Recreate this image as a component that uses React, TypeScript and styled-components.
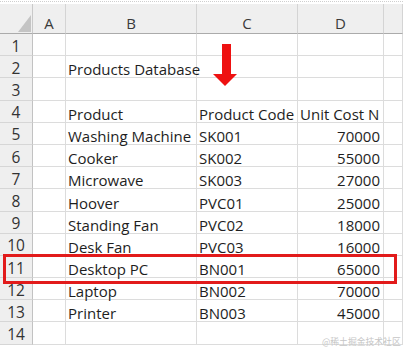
import React from 'react';
import styled, { createGlobalStyle } from 'styled-components';

type Align = 'left' | 'right';

type RowData = {
  product?: string;
  code?: string;
  cost?: string;
};

const rows: RowData[] = [
  {},
  { product: 'Products Database' },
  {},
  { product: 'Product', code: 'Product Code', cost: 'Unit Cost N' },
  { product: 'Washing Machine', code: 'SK001', cost: '70000' },
  { product: 'Cooker', code: 'SK002', cost: '55000' },
  { product: 'Microwave', code: 'SK003', cost: '27000' },
  { product: 'Hoover', code: 'PVC01', cost: '25000' },
  { product: 'Standing Fan', code: 'PVC02', cost: '18000' },
  { product: 'Desk Fan', code: 'PVC03', cost: '16000' },
  { product: 'Desktop PC', code: 'BN001', cost: '65000' },
  { product: 'Laptop', code: 'BN002', cost: '70000' },
  { product: 'Printer', code: 'BN003', cost: '45000' },
  {},
];

const GlobalStyle = createGlobalStyle`
  html, body {
    margin: 0;
    padding: 0;
    background: #fff;
  }
  body {
    font-family: "Open Sans", "Liberation Sans", sans-serif;
  }
`;

const Frame = styled.div`
  position: relative;
  width: 403px;
  height: 351px;
  overflow: hidden;
  background: #fff;
`;

const TopEdge = styled.div`
  height: 3px;
  border-top: 1px dotted #cfcfcf;
  box-sizing: border-box;
  margin-top: 1px;
`;

const Sheet = styled.div`
  display: grid;
  grid-template-columns: 33px 33px 131px 101px 86px 1fr;
  grid-template-rows: 30px repeat(14, 22.2px);
`;

const Corner = styled.div`
  background: #efefef;
  border-right: 1px solid #c9c9c9;
  border-bottom: 1px solid #ababab;
  display: flex;
  align-items: flex-end;
  justify-content: flex-end;
  padding: 0 1px 1px 0;
`;

const ColHead = styled.div`
  background: #efefef;
  border-right: 1px solid #d4d4d4;
  border-bottom: 1px solid #ababab;
  display: flex;
  align-items: center;
  justify-content: center;
  font-size: 15px;
  line-height: 1;
  color: #3a3a3a;
  padding-top: 9px;
  box-sizing: border-box;
`;

const RowHead = styled.div`
  background: #efefef;
  border-right: 1px solid #c2c2c2;
  border-bottom: 1px solid #d6d6d6;
  display: flex;
  align-items: flex-end;
  justify-content: center;
  font-size: 15.5px;
  color: #333;
  line-height: 1;
  padding-bottom: 1px;
  box-sizing: border-box;
`;

const Cell = styled.div<{ $align?: Align }>`
  border-right: 1px solid #dcdcdc;
  border-bottom: 1px solid #dcdcdc;
  display: flex;
  align-items: flex-end;
  justify-content: ${({ $align }) =>
    $align === 'right' ? 'flex-end' : 'flex-start'};
  padding: 0 3px 0 2px;
  box-sizing: border-box;
  font-size: 15px;
  line-height: 1;
  color: #1e1e1e;
  white-space: nowrap;
  overflow: visible;
  min-width: 0;
`;

const Highlight = styled.div`
  position: absolute;
  left: 3px;
  top: 254px;
  width: 394px;
  height: 30px;
  border: 3px solid #e21b1b;
  box-sizing: border-box;
  pointer-events: none;
`;

const Arrow = styled.svg`
  position: absolute;
  left: 213px;
  top: 44px;
`;

const Watermark = styled.div`
  position: absolute;
  left: 322px;
  top: 335px;
  font-family: "Noto Sans CJK SC", sans-serif;
  font-size: 8.8px;
  color: #c6c6c6;
  white-space: nowrap;
`;

export default function App() {
  return (
    <Frame>
      <GlobalStyle />
      <TopEdge />
      <Sheet>
        <Corner>
          <svg width="13" height="17" viewBox="0 0 13 17">
            <polygon points="13,0 13,17 0,17" fill="#c4c4c4" />
          </svg>
        </Corner>
        {['A', 'B', 'C', 'D', ''].map((c, i) => (
          <ColHead key={i}>{c}</ColHead>
        ))}
        {rows.map((r, i) => (
          <React.Fragment key={i}>
            <RowHead>{i + 1}</RowHead>
            <Cell />
            <Cell>{r.product}</Cell>
            <Cell>{r.code}</Cell>
            <Cell $align={i === 3 ? 'left' : 'right'}>{r.cost}</Cell>
            <Cell />
          </React.Fragment>
        ))}
      </Sheet>
      <Arrow width="24" height="42" viewBox="0 0 24 42">
        <rect x="9" y="0" width="9" height="31" fill="#ee1111" />
        <polygon points="0,30 24,30 12,42" fill="#ee1111" />
      </Arrow>
      <Highlight />
      <Watermark>@稀土掘金技术社区</Watermark>
    </Frame>
  );
}
